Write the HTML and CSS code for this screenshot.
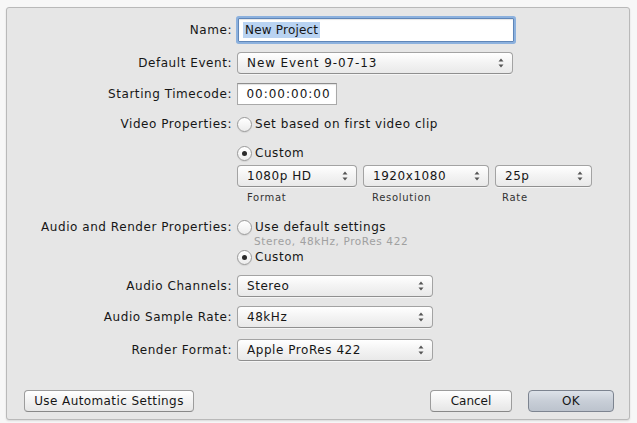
FILE: index.html
```html
<!DOCTYPE html>
<html>
<head>
<meta charset="utf-8">
<link rel="stylesheet" href="styles.css">
</head>
<body>
<div class="dialog">
  <div class="row r-name">
    <div class="label">Name:</div>
    <div class="ctrl"><div class="textfield focus"><span class="sel">New Project</span></div></div>
  </div>
  <div class="row r-event">
    <div class="label">Default Event:</div>
    <div class="ctrl"><div class="select w-event"><span>New Event 9-07-13</span><svg class="arr" width="6" height="10" viewBox="0 0 6 10"><path d="M3 0.5L5.5 3.5H0.5Z M3 9.5L5.5 6.5H0.5Z" fill="#555"/></svg></div></div>
  </div>
  <div class="row r-tc">
    <div class="label">Starting Timecode:</div>
    <div class="ctrl"><div class="textfield tc">00:00:00:00</div></div>
  </div>
  <div class="row r-video">
    <div class="label">Video Properties:</div>
    <div class="ctrl"><span class="radio"></span><span class="rtext">Set based on first video clip</span></div>
  </div>
  <div class="row r-custom1">
    <div class="label"></div>
    <div class="ctrl"><span class="radio on"></span><span class="rtext">Custom</span></div>
  </div>
  <div class="row r-triple">
    <div class="label"></div>
    <div class="ctrl triple">
      <div class="select w-fmt"><span>1080p HD</span><svg class="arr" width="6" height="10" viewBox="0 0 6 10"><path d="M3 0.5L5.5 3.5H0.5Z M3 9.5L5.5 6.5H0.5Z" fill="#555"/></svg></div>
      <div class="select w-res"><span>1920x1080</span><svg class="arr" width="6" height="10" viewBox="0 0 6 10"><path d="M3 0.5L5.5 3.5H0.5Z M3 9.5L5.5 6.5H0.5Z" fill="#555"/></svg></div>
      <div class="select w-rate"><span>25p</span><svg class="arr" width="6" height="10" viewBox="0 0 6 10"><path d="M3 0.5L5.5 3.5H0.5Z M3 9.5L5.5 6.5H0.5Z" fill="#555"/></svg></div>
    </div>
  </div>
  <div class="row r-sub">
    <div class="label"></div>
    <div class="ctrl triple small">
      <span class="cap w-fmt c1">Format</span>
      <span class="cap w-res c2">Resolution</span>
      <span class="cap w-rate c3">Rate</span>
    </div>
  </div>
  <div class="row r-audio">
    <div class="label">Audio and Render Properties:</div>
    <div class="ctrl"><span class="radio"></span><span class="rtext">Use default settings</span></div>
  </div>
  <div class="row r-hint">
    <div class="label"></div>
    <div class="ctrl hint">Stereo, 48kHz, ProRes 422</div>
  </div>
  <div class="row r-custom2">
    <div class="label"></div>
    <div class="ctrl"><span class="radio on"></span><span class="rtext">Custom</span></div>
  </div>
  <div class="row r-ch">
    <div class="label">Audio Channels:</div>
    <div class="ctrl"><div class="select w-audio"><span>Stereo</span><svg class="arr" width="6" height="10" viewBox="0 0 6 10"><path d="M3 0.5L5.5 3.5H0.5Z M3 9.5L5.5 6.5H0.5Z" fill="#555"/></svg></div></div>
  </div>
  <div class="row r-sr">
    <div class="label">Audio Sample Rate:</div>
    <div class="ctrl"><div class="select w-audio"><span>48kHz</span><svg class="arr" width="6" height="10" viewBox="0 0 6 10"><path d="M3 0.5L5.5 3.5H0.5Z M3 9.5L5.5 6.5H0.5Z" fill="#555"/></svg></div></div>
  </div>
  <div class="row r-rf">
    <div class="label">Render Format:</div>
    <div class="ctrl"><div class="select w-audio"><span>Apple ProRes 422</span><svg class="arr" width="6" height="10" viewBox="0 0 6 10"><path d="M3 0.5L5.5 3.5H0.5Z M3 9.5L5.5 6.5H0.5Z" fill="#555"/></svg></div></div>
  </div>
  <div class="footer">
    <button class="btn auto">Use Automatic Settings</button>
    <div class="spacer"></div>
    <button class="btn cancel">Cancel</button>
    <button class="btn ok">OK</button>
  </div>
</div>
</body>
</html>
```

FILE: styles.css
```css
html, body {
  margin: 0;
  padding: 0;
  background: #f7f7f7;
}
body {
  padding: 7px 7px 3px 6px;
  font-family: "DejaVu Sans", "Liberation Sans", sans-serif;
  font-size: 12px;
  letter-spacing: 0.55px;
  color: #161616;
}
.dialog {
  box-sizing: border-box;
  width: 624px;
  height: 413px;
  background: #e6e6e6;
  border: 1px solid #b9b9b9;
  border-radius: 3px;
  box-shadow: 0 1px 2px rgba(0,0,0,0.12);
}
.row {
  display: flex;
  align-items: center;
}
.label {
  width: 225px;
  flex: none;
  text-align: right;
  padding-right: 5px;
  box-sizing: content-box;
  white-space: nowrap;
}
.ctrl {
  display: flex;
  align-items: center;
  white-space: nowrap;
}
.r-name { margin-top: 9px; height: 26px; }
.r-event { margin-top: 9px; height: 22px; }
.r-tc { margin-top: 9px; height: 22px; }
.r-video { margin-top: 10px; height: 18px; }
.r-custom1 { margin-top: 11px; height: 18px; }
.r-triple { margin-top: 3px; height: 22px; }
.r-sub { margin-top: 4px; height: 12px; }
.r-audio { margin-top: 16px; height: 16px; }
.r-hint { height: 12px; }
.r-custom2 { margin-top: 2px; height: 16px; }
.r-ch { margin-top: 10px; height: 22px; }
.r-sr { margin-top: 9px; height: 22px; }
.r-rf { margin-top: 11px; height: 22px; }

.textfield {
  box-sizing: border-box;
  height: 22px;
  background: #fff;
  border: 1px solid #a9a9a9;
  border-top-color: #8e8e8e;
  box-shadow: inset 0 1px 1px rgba(0,0,0,0.12);
  display: flex;
  align-items: center;
}
.textfield.focus {
  width: 276px;
  height: 24px;
  padding-left: 4px;
  border: 1px solid #5f86b8;
  box-shadow: 0 0 0 2px #8cb1de, inset 0 1px 1px rgba(0,0,0,0.1);
  border-radius: 1px;
  margin-left: 1px;
}
.sel {
  background: #b9d3f2;
  padding: 1px 2px;
  letter-spacing: 0.2px;
}
.textfield.tc {
  width: 100px;
  justify-content: center;
  padding-left: 3px;
  letter-spacing: 1px;
}
.select {
  box-sizing: border-box;
  height: 22px;
  border: 1px solid #a3a3a3;
  border-bottom-color: #8f8f8f;
  border-radius: 4px;
  background: linear-gradient(#ffffff, #f3f3f3 50%, #e9e9e9);
  box-shadow: 0 1px 0 rgba(255,255,255,0.6);
  display: flex;
  align-items: center;
  justify-content: space-between;
  padding: 0 8px 0 9px;
}
.select .arr { flex: none; }
.w-event { width: 276px; }
.w-event span { letter-spacing: 0.9px; }
.w-fmt { width: 120px; }
.w-res { width: 126px; }
.w-rate { width: 97px; }
.w-audio { width: 196px; }
.triple { gap: 6px; }
.small { font-size: 10px; letter-spacing: 0.7px; color: #333; }
.cap { display: block; }
.c1 { padding-left: 10px; box-sizing: border-box; }
.c2 { padding-left: 9px; box-sizing: border-box; }
.c3 { padding-left: 7px; box-sizing: border-box; }

.radio {
  box-sizing: border-box;
  width: 15px;
  height: 15px;
  border-radius: 50%;
  border: 1px solid #9a9a9a;
  background: linear-gradient(#ffffff, #ececec);
  box-shadow: inset 0 1px 1px rgba(255,255,255,0.8), 0 1px 1px rgba(0,0,0,0.08);
  display: inline-flex;
  align-items: center;
  justify-content: center;
  flex: none;
}
.radio.on::after {
  content: "";
  width: 5px;
  height: 5px;
  border-radius: 50%;
  background: #2a2a2a;
}
.rtext { margin-left: 3px; }
.hint {
  padding-left: 17px;
  font-size: 10.5px;
  letter-spacing: 0.6px;
  color: #a0a0a0;
}

.footer {
  margin-top: 29px;
  display: flex;
  align-items: center;
  padding: 0 15px 0 17px;
}
.spacer { flex: 1; }
.btn {
  box-sizing: border-box;
  height: 22px;
  font-family: "DejaVu Sans", "Liberation Sans", sans-serif;
  font-size: 12px;
  letter-spacing: 0.4px;
  color: #161616;
  border: 1px solid #9c9c9c;
  border-bottom-color: #888;
  border-radius: 4px;
  background: linear-gradient(#ffffff, #f2f2f2 50%, #e6e6e6);
  padding: 0;
}
.auto { width: 170px; }
.cancel { width: 82px; letter-spacing: 0; }
.ok {
  width: 86px;
  margin-left: 16px;
  border-color: #7d8490;
  background: linear-gradient(#dde2e9, #c8ced7 50%, #bcc3cd);
}
```
